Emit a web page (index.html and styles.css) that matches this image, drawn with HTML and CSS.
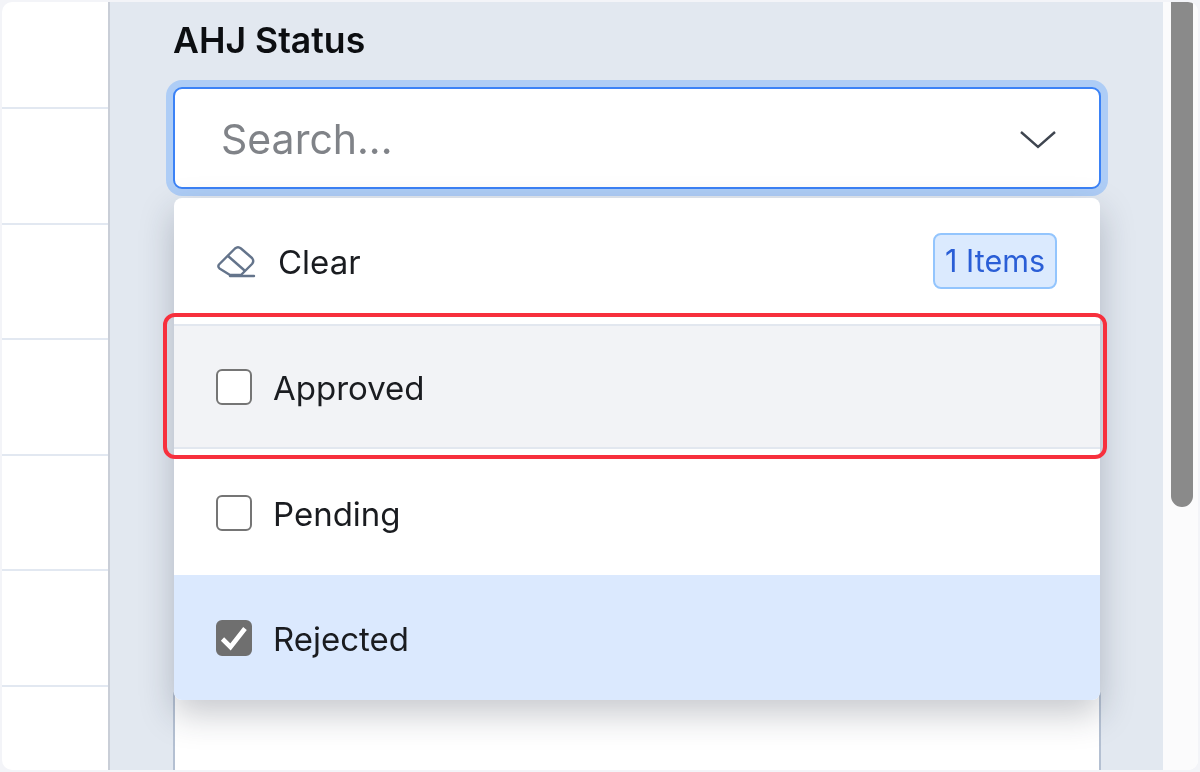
FILE: index.html
```html
<!DOCTYPE html>
<html lang="en">
<head>
    <meta charset="UTF-8">
    <meta name="viewport" content="width=device-width, initial-scale=1.0">
    <title>AHJ Status</title>
    <link rel="stylesheet" href="styles.css">
</head>
<body>
    <div class="frame">
        <div class="table-edge">
            <div class="table-row"></div>
            <div class="table-row"></div>
            <div class="table-row"></div>
            <div class="table-row"></div>
            <div class="table-row"></div>
            <div class="table-row"></div>
            <div class="table-row"></div>
        </div>

        <div class="filter-panel">
            <div class="filter-field">
                <label class="filter-label">AHJ Status</label>
                <div class="select-control">
                    <span class="select-placeholder">Search...</span>
                    <svg class="select-chevron" width="38" height="24" viewBox="0 0 38 24" fill="none">
                        <path d="M2 4L19 19L36 4" stroke="#3f4650" stroke-width="2.4"/>
                    </svg>
                </div>

                <div class="select-menu">
                    <div class="menu-row menu-head">
                        <svg class="clear-icon" width="40" height="34" viewBox="0 0 40 34" fill="none" stroke="#64748b" stroke-width="2.4" stroke-linejoin="round" stroke-linecap="round">
                            <path d="M2 19.5L18 3.5Q21 1 24 3.5L35 13Q37.5 16 35 19L24 30H13L2.5 23.5Q0.5 21.5 2 19.5Z"/>
                            <path d="M11 11L27 25"/>
                            <path d="M13 31H37"/>
                        </svg>
                        <span class="menu-text">Clear</span>
                        <span class="count-badge">1 Items</span>
                    </div>
                    <div class="menu-row is-hover">
                        <span class="checkbox"></span>
                        <span class="menu-text">Approved</span>
                    </div>
                    <div class="menu-row">
                        <span class="checkbox"></span>
                        <span class="menu-text">Pending</span>
                    </div>
                    <div class="menu-row is-selected">
                        <span class="checkbox is-checked">
                            <svg width="28" height="26" viewBox="0 0 28 26" fill="none">
                                <path d="M2.5 14L10.5 22L25 3.5" stroke="#fff" stroke-width="4.6"/>
                            </svg>
                        </span>
                        <span class="menu-text">Rejected</span>
                    </div>
                </div>

                <div class="highlight-box"></div>
            </div>

            <div class="next-field"></div>
        </div>

        <div class="scroll-track">
            <div class="scroll-thumb"></div>
        </div>
    </div>
</body>
</html>
```

FILE: styles.css
```css
html,
body {
    margin: 0;
    height: 100%;
    overflow: hidden;
}

body {
    background-color: #f3f4f8;
    font-family: "Inter", "Liberation Sans", sans-serif;
}

.frame {
    display: flex;
    height: 768px;
    margin: 2px;
    border-radius: 10px;
    overflow: hidden;
    background-color: #fff;
    filter: blur(0.75px);
}

.table-edge {
    width: 106px;
    flex-shrink: 0;
}

.table-row {
    height: 115.6px;
    box-sizing: border-box;
    border-bottom: 2px solid #e2e8f1;
}

.table-row:first-child {
    height: 107px;
}

.filter-panel {
    flex: 1;
    display: flex;
    flex-direction: column;
    padding: 0 63px 0 64px;
    background-color: #e2e8f0;
    border-left: 2px solid #c9ced7;
    min-width: 0;
}

.filter-field {
    position: relative;
}

.filter-label {
    display: block;
    margin: 19px 0 26px -1px;
    font-size: 35.6px;
    line-height: 40px;
    font-weight: 600;
    color: #0c0e11;
}

.select-control {
    display: flex;
    align-items: center;
    justify-content: space-between;
    box-sizing: border-box;
    height: 102px;
    margin: 0 -1px;
    padding: 0 42px 0 46px;
    background-color: #fff;
    border: 2.5px solid #3b82f6;
    border-radius: 9px;
    box-shadow: 0 0 0 7px #aecdf6;
}

.select-placeholder {
    margin-top: 2px;
    font-size: 41px;
    color: #808388;
}

.select-chevron {
    margin-top: 4px;
}

.select-menu {
    position: absolute;
    z-index: 2;
    top: 196px;
    left: 0;
    right: 0;
    background-color: #fff;
    border-radius: 8px;
    box-shadow: 0 14px 34px rgba(30, 41, 59, 0.25);
    overflow: hidden;
}

.menu-row {
    display: flex;
    align-items: center;
    gap: 21px;
    box-sizing: border-box;
    height: 125.5px;
    padding: 0 42px;
}

.menu-head {
    gap: 21px;
    padding-right: 43px;
}

.menu-head .menu-text {
    margin-top: 2px;
}

.menu-text {
    margin-top: 4px;
    font-size: 33px;
    color: #1a1c20;
}

.clear-icon {
    margin-top: 2px;
    margin-left: 1px;
}

.count-badge {
    margin-left: auto;
    padding: 0 10px;
    height: 56px;
    line-height: 52px;
    box-sizing: border-box;
    font-size: 30.5px;
    color: #2a5ed6;
    background-color: #dbeafe;
    border: 2px solid #93c5fd;
    border-radius: 8px;
}

.checkbox {
    display: flex;
    align-items: center;
    justify-content: center;
    box-sizing: border-box;
    width: 36px;
    height: 36px;
    flex-shrink: 0;
    margin-top: 2px;
    background-color: #fff;
    border: 2px solid #757575;
    border-radius: 6px;
}

.checkbox.is-checked {
    background-color: #6f6f6f;
    border-color: #6f6f6f;
}

.is-hover {
    background-color: #f2f3f6;
    border-top: 2px solid #e2e7ef;
    border-bottom: 2px solid #e2e7ef;
}

.is-selected {
    background-color: #dbe9fe;
}

.highlight-box {
    position: absolute;
    z-index: 3;
    top: 311px;
    left: -11px;
    right: -7px;
    height: 146px;
    box-sizing: border-box;
    border: 4px solid #f7303d;
    border-radius: 12px;
}

.next-field {
    flex: 1;
    margin: 500px -1px 0;
    background-color: #fff;
    border: 2px solid #b4c0d2;
    border-bottom: none;
    border-radius: 6px 6px 0 0;
}

.scroll-track {
    width: 35px;
    flex-shrink: 0;
    background-color: #fbfbfc;
}

.scroll-thumb {
    width: 22px;
    height: 505px;
    margin-left: 8px;
    background-color: #8a8a8a;
    border-radius: 0 0 11px 11px;
}
```
